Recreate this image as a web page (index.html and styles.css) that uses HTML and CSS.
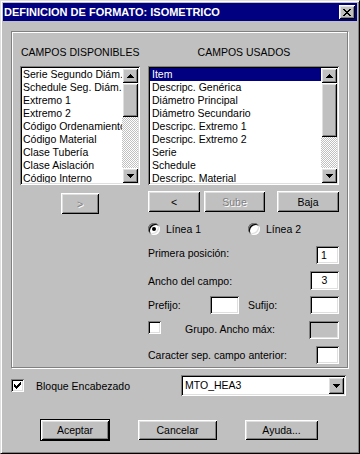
FILE: index.html
```html
<!DOCTYPE html>
<html lang="es">
<head>
    <meta charset="UTF-8">
    <meta name="viewport" content="width=device-width, initial-scale=1.0">
    <title>Definicion de Formato</title>
    <link rel="stylesheet" href="styles.css">
</head>
<body>
    <div class="ventana">
        <div class="barra-titulo">
            <span class="titulo">DEFINICION DE FORMATO: ISOMETRICO</span>
            <button class="btn-cerrar" aria-label="Cerrar">
                <svg width="8" height="7" viewBox="0 0 8 7"><path d="M0 0h2v1h-2z M6 0h2v1h-2z M1 1h2v1h-2z M5 1h2v1h-2z M2 2h4v1h-4z M3 3h2v1h-2z M2 4h4v1h-4z M1 5h2v1h-2z M5 5h2v1h-2z M0 6h2v1h-2z M6 6h2v1h-2z"/></svg>
            </button>
        </div>

        <div class="contenido">
            <div class="grupo">
                <!-- columna de campos disponibles -->
                <div class="col-izq">
                    <p class="etiqueta">CAMPOS DISPONIBLES</p>
                    <div class="lista">
                        <ul class="items">
                            <li>Serie Segundo Diám.</li>
                            <li>Schedule Seg. Diám.</li>
                            <li>Extremo 1</li>
                            <li>Extremo 2</li>
                            <li>Código Ordenamiento</li>
                            <li>Código Material</li>
                            <li>Clase Tubería</li>
                            <li>Clase Aislación</li>
                            <li>Código Interno</li>
                        </ul>
                        <div class="scroll">
                            <div class="flecha"><svg width="7" height="4" viewBox="0 0 7 4"><path d="M3 0h1v1h1v1h1v1h1v1H0V3h1V2h1V1h1z"/></svg></div>
                            <div class="pista"><div class="pulgar pulgar-izq"></div></div>
                            <div class="flecha"><svg width="7" height="4" viewBox="0 0 7 4"><path d="M0 0h7v1h-1v1h-1v1h-1v1h-1v-1h-1v-1h-1v-1h-1z"/></svg></div>
                        </div>
                    </div>
                    <button class="boton btn-agregar" disabled>&gt;</button>
                </div>

                <!-- columna de campos usados -->
                <div class="col-der">
                    <p class="etiqueta">CAMPOS USADOS</p>
                    <div class="lista">
                        <ul class="items">
                            <li class="sel">Item</li>
                            <li>Descripc. Genérica</li>
                            <li>Diámetro Principal</li>
                            <li>Diámetro Secundario</li>
                            <li>Descripc. Extremo 1</li>
                            <li>Descripc. Extremo 2</li>
                            <li>Serie</li>
                            <li>Schedule</li>
                            <li>Descripc. Material</li>
                        </ul>
                        <div class="scroll">
                            <div class="flecha"><svg width="7" height="4" viewBox="0 0 7 4"><path d="M3 0h1v1h1v1h1v1h1v1H0V3h1V2h1V1h1z"/></svg></div>
                            <div class="pista"><div class="pulgar pulgar-der"></div></div>
                            <div class="flecha"><svg width="7" height="4" viewBox="0 0 7 4"><path d="M0 0h7v1h-1v1h-1v1h-1v1h-1v-1h-1v-1h-1v-1h-1z"/></svg></div>
                        </div>
                    </div>

                    <div class="fila-botones">
                        <button class="boton btn-volver">&lt;</button>
                        <button class="boton btn-sube" disabled>Sube</button>
                        <button class="boton btn-baja">Baja</button>
                    </div>

                    <div class="fila-radios">
                        <label class="opcion opcion-1"><span class="radio"><span class="punto"></span></span>Línea 1</label>
                        <label class="opcion"><span class="radio"></span>Línea 2</label>
                    </div>

                    <div class="fila fila-primera">
                        <span class="lbl-alto">Primera posición:</span>
                        <span class="caja caja-chica caja-uno">1</span>
                    </div>

                    <div class="fila fila-ancho">
                        <span>Ancho del campo:</span>
                        <span class="caja caja-media caja-alta">3</span>
                    </div>

                    <div class="fila fila-prefijo">
                        <span class="lbl-prefijo">Prefijo:</span>
                        <span class="caja caja-media"></span>
                        <span class="lbl-sufijo">Sufijo:</span>
                        <span class="caja caja-media"></span>
                    </div>

                    <div class="fila fila-grupo">
                        <span class="check"></span>
                        <span class="lbl-grupo">Grupo. Ancho máx:</span>
                        <span class="caja caja-gris"></span>
                    </div>

                    <div class="fila fila-caracter">
                        <span>Caracter sep. campo anterior:</span>
                        <span class="caja caja-chica"></span>
                    </div>
                </div>
            </div>

            <div class="fila-bloque">
                <span class="check">
                    <svg width="7" height="7" viewBox="0 0 7 7"><path d="M6 0h1v3h-1z M5 1h1v3h-1z M4 2h1v3h-1z M3 3h1v3h-1z M2 4h1v3h-1z M1 3h1v3h-1z M0 2h1v3h-1z"/></svg>
                </span>
                <span class="lbl-bloque">Bloque Encabezado</span>
                <div class="combo">
                    <span class="combo-texto">MTO_HEA3</span>
                    <span class="combo-boton"><svg width="7" height="4" viewBox="0 0 7 4"><path d="M0 0h7v1h-1v1h-1v1h-1v1h-1v-1h-1v-1h-1v-1h-1z"/></svg></span>
                </div>
            </div>

            <div class="botones">
                <button class="boton btn-aceptar">Aceptar</button>
                <button class="boton btn-cancelar">Cancelar</button>
                <button class="boton btn-ayuda">Ayuda...</button>
            </div>
        </div>
    </div>
</body>
</html>
```

FILE: styles.css
```css
/* Dialogo estilo Windows 95 */
:root {
    --gris: #c0c0c0;
    --gris-osc: #808080;
    --gris-cla: #dfdfdf;
    --azul: #000080;
    --blanco: #ffffff;
    --negro: #000000;
}

* {
    margin: 0;
    padding: 0;
    box-sizing: border-box;
}

body {
    font-family: "Liberation Sans", Arial, sans-serif;
    font-size: 10.5px;
    color: var(--negro);
    background-color: var(--gris);
    width: 360px;
    height: 454px;
    overflow: hidden;
}

button {
    font: inherit;
    color: inherit;
    border: none;
    background-color: var(--gris);
    cursor: default;
}

svg { display: block; fill: var(--negro); }

/* bordes en relieve */
.boton, .btn-cerrar, .flecha, .pulgar, .combo-boton {
    background-color: var(--gris);
    box-shadow: inset 1px 1px var(--blanco), inset -1px -1px var(--negro),
                inset 2px 2px var(--gris-cla), inset -2px -2px var(--gris-osc);
}

.lista, .caja, .check, .combo {
    background-color: var(--blanco);
    box-shadow: inset 1px 1px var(--gris-osc), inset -1px -1px var(--blanco),
                inset 2px 2px var(--negro), inset -2px -2px var(--gris-cla);
}

.ventana {
    width: 360px;
    height: 454px;
    background-color: var(--gris);
    border: 1px solid;
    border-color: var(--gris-cla) var(--negro) var(--negro) var(--gris-cla);
    box-shadow: inset 1px 1px var(--blanco), inset -1px -1px var(--gris-osc);
    padding: 2px;
}

.barra-titulo {
    height: 18px;
    background-color: var(--azul);
    display: flex;
    align-items: center;
    justify-content: space-between;
    padding: 0 2px 0 1px;
}

.titulo {
    color: var(--blanco);
    font-weight: bold;
    font-size: 11px;
    line-height: 18px;
}

.btn-cerrar {
    width: 16px;
    height: 14px;
    display: flex;
    align-items: center;
    justify-content: center;
}

.contenido {
    padding: 10px 0 0 8px;
}

.grupo {
    width: 337px;
    height: 337px;
    border: 1px solid var(--gris-osc);
    box-shadow: 1px 1px 0 var(--blanco), inset 1px 1px 0 var(--blanco);
    padding: 14px 0 0 8px;
    display: flex;
    gap: 8px;
}

.col-izq { width: 120px; }
.col-der { width: 191px; }

.etiqueta {
    height: 13px;
    line-height: 13px;
    margin-bottom: 7px;
    padding-left: 1px;
    white-space: nowrap;
}

.col-der .etiqueta { text-align: center; }

/* listas */
.lista {
    height: 119px;
    padding: 2px;
    display: flex;
}

.items {
    flex: 1;
    min-width: 0;
    list-style: none;
    overflow: hidden;
}

.items li {
    height: 13px;
    line-height: 13px;
    padding-left: 1px;
    white-space: nowrap;
    overflow: hidden;
}

.col-der .items li { padding-left: 2px; }

.items li.sel {
    background-color: var(--azul);
    color: var(--blanco);
}

.scroll {
    width: 16px;
    display: flex;
    flex-direction: column;
}

.flecha {
    height: 15px;
    flex-shrink: 0;
    display: flex;
    align-items: center;
    justify-content: center;
}

.pista {
    flex: 1;
    background: repeating-conic-gradient(var(--gris) 0 25%, var(--blanco) 0 50%) 0 0 / 2px 2px;
}

.pulgar-izq { height: 34px; }
.pulgar-der { height: 54px; }

/* botones */
.boton {
    display: flex;
    align-items: center;
    justify-content: center;
    height: 21px;
}

.boton:disabled {
    color: var(--gris-osc);
    text-shadow: 1px 1px 0 var(--blanco);
}

.btn-agregar {
    width: 38px;
    margin: 8px 0 0 41px;
}

.fila-botones {
    display: flex;
    margin-top: 6px;
}

.btn-volver { width: 52px; }
.btn-sube { width: 61px; margin-left: 4px; }
.btn-baja { width: 62px; margin-left: 12px; }

/* radios */
.fila-radios {
    display: flex;
    align-items: center;
    height: 13px;
    margin-top: 10px;
}

.opcion {
    display: flex;
    align-items: center;
    gap: 6px;
}

.opcion-1 { width: 100px; }

.radio {
    width: 12px;
    height: 12px;
    border-radius: 50%;
    background-color: var(--blanco);
    box-shadow: inset 1px 1px var(--gris-osc), inset -1px -1px var(--blanco),
                inset 2px 2px var(--negro), inset -2px -2px var(--gris-cla);
    display: flex;
    align-items: center;
    justify-content: center;
}

.punto {
    width: 4px;
    height: 4px;
    border-radius: 50%;
    background-color: var(--negro);
}

/* filas de campos */
.fila {
    display: flex;
    align-items: center;
    height: 18px;
}

.caja {
    height: 18px;
    line-height: 18px;
    text-align: center;
}

.caja-chica { width: 23px; }
.caja-media { width: 29px; }
.caja-uno { text-align: left; padding-left: 5px; }
.caja-alta { height: 19px; line-height: 19px; }

.fila-primera {
    margin-top: 11px;
    justify-content: space-between;
    align-items: flex-start;
}

.lbl-alto {
    line-height: 13px;
    margin-top: 1px;
}

.fila-ancho {
    margin-top: 7px;
    height: 19px;
    justify-content: space-between;
}

.fila-prefijo { margin-top: 6px; }

.lbl-prefijo { width: 62px; }

.lbl-sufijo {
    margin-left: 9px;
    margin-right: auto;
}

.fila-grupo {
    margin-top: 7px;
    align-items: flex-start;
}

.check {
    width: 13px;
    height: 13px;
    flex-shrink: 0;
    display: flex;
    align-items: center;
    justify-content: center;
}

.lbl-grupo {
    margin: 2px auto 0 24px;
    line-height: 13px;
}

.caja-gris {
    width: 30px;
    background-color: var(--gris);
}

.fila-caracter {
    margin-top: 7px;
    justify-content: space-between;
}

/* bloque encabezado */
.fila-bloque {
    display: flex;
    align-items: center;
    width: 335px;
    height: 21px;
    margin-top: 7px;
}

.lbl-bloque { margin-left: 12px; }

.combo {
    margin-left: auto;
    width: 165px;
    height: 21px;
    padding: 2px;
    display: flex;
}

.combo-texto {
    flex: 1;
    line-height: 17px;
    padding-left: 2px;
}

.combo-boton {
    width: 16px;
    height: 17px;
    display: flex;
    align-items: center;
    justify-content: center;
}

/* botones inferiores */
.botones {
    display: flex;
    align-items: center;
    height: 22px;
    margin-top: 23px;
    padding-left: 29px;
    gap: 28px;
}

.botones .boton { height: 20px; }

.btn-aceptar {
    width: 70px;
    border: 1px solid var(--negro);
}

.botones .btn-aceptar { height: 22px; }
.btn-cancelar { width: 79px; }
.btn-ayuda { width: 73px; }
```
